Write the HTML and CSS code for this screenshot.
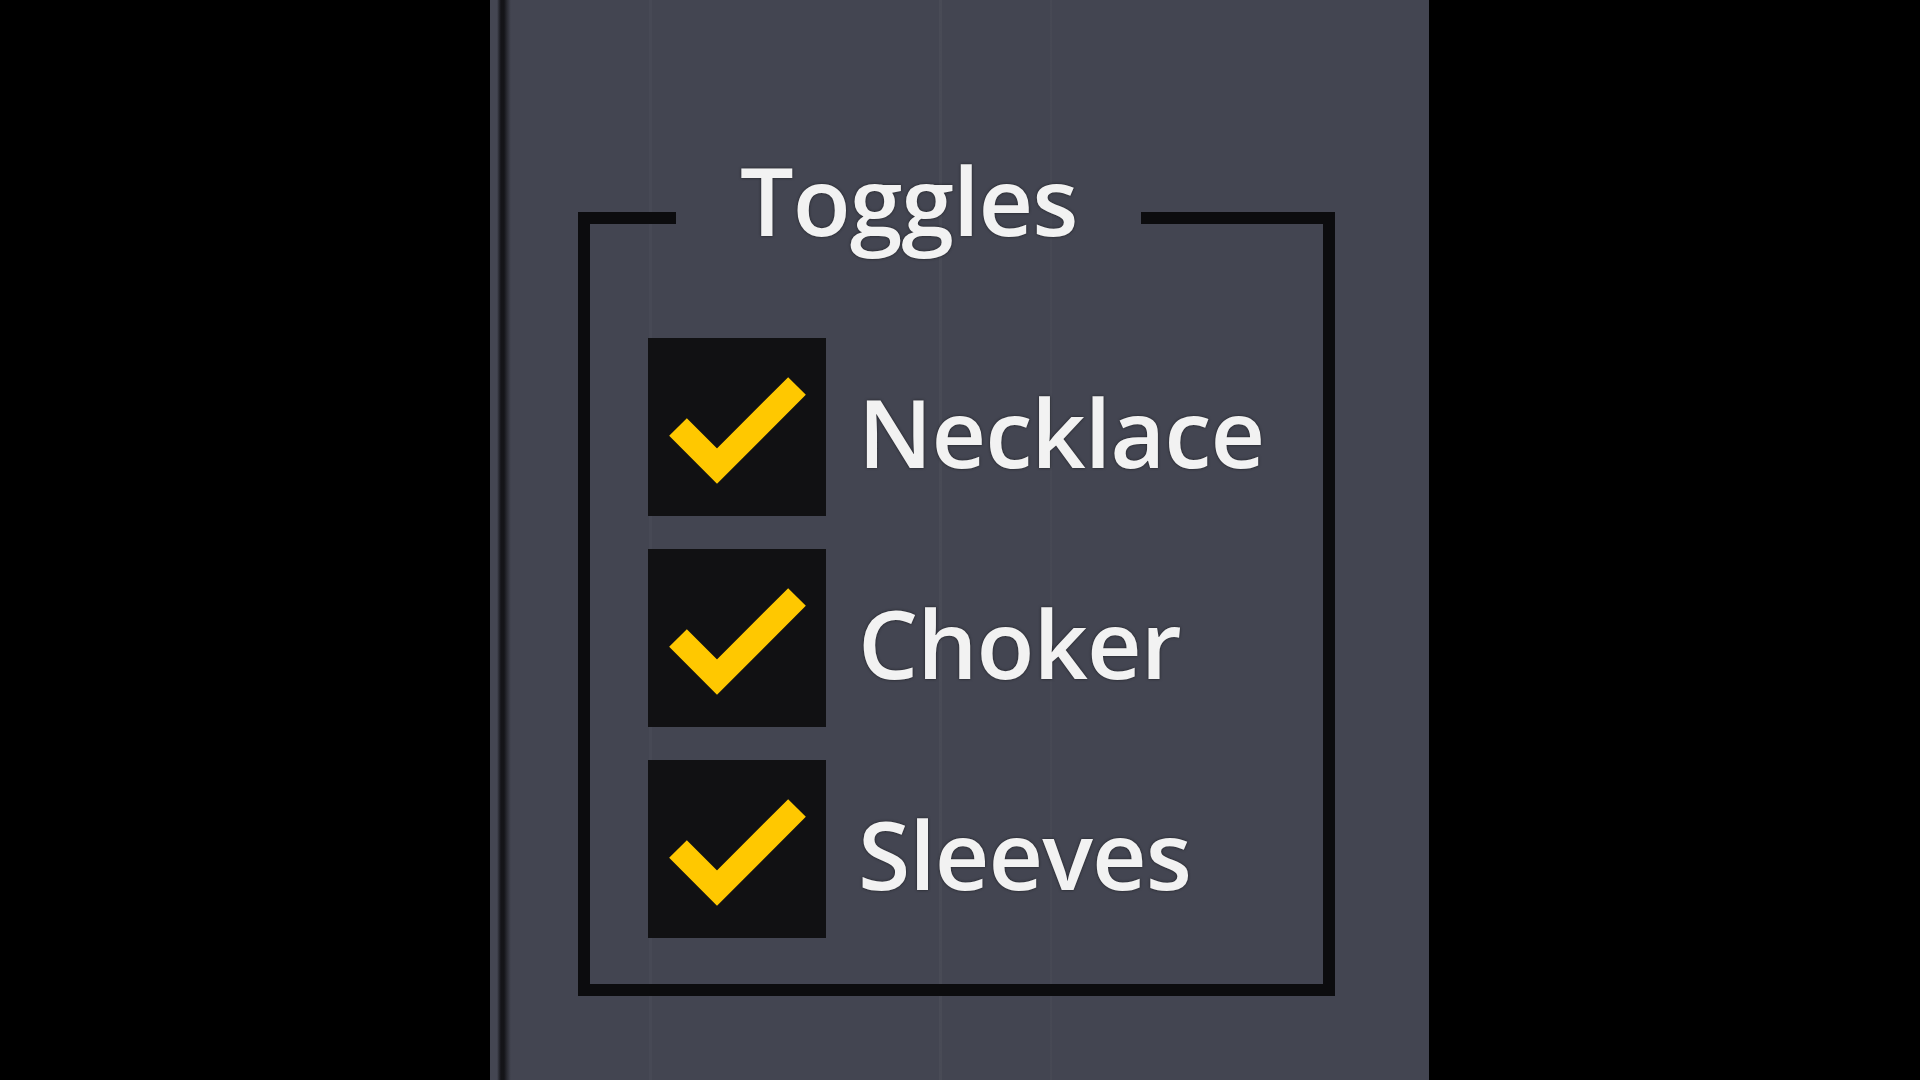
FILE: index.html
```html
<!DOCTYPE html>
<html lang="en">
<head>
<meta charset="utf-8">
<title>Toggles</title>
<link rel="stylesheet" href="styles.css">
</head>
<body>
<div class="screen">
  <aside class="panel">
    <fieldset class="group">
      <legend class="group-title">Toggles</legend>
      <label class="toggle">
        <span class="box"><svg viewBox="0 0 178 178" class="tick"><polyline points="30,89 69,128 149,48"/></svg></span>
        <span class="text">Necklace</span>
      </label>
      <label class="toggle">
        <span class="box"><svg viewBox="0 0 178 178" class="tick"><polyline points="30,89 69,128 149,48"/></svg></span>
        <span class="text">Choker</span>
      </label>
      <label class="toggle">
        <span class="box"><svg viewBox="0 0 178 178" class="tick"><polyline points="30,89 69,128 149,48"/></svg></span>
        <span class="text">Sleeves</span>
      </label>
    </fieldset>
  </aside>
</div>
</body>
</html>
```
FILE: styles.css
```css
html, body {
  margin: 0;
  padding: 0;
  background: #000;
}
.screen {
  width: 1920px;
  height: 1080px;
  display: flex;
  background: #000;
}
.panel {
  margin-left: 490px;
  width: 939px;
  height: 1080px;
  box-sizing: border-box;
  padding-left: 88px;
  padding-top: 135px;
  background:
    linear-gradient(to right, #444652 0, #444652 7px, #2a2b33 9px, #141418 11px, #141418 14px, #2a2b33 17px, #444652 21px, transparent 21px),
    linear-gradient(to right, transparent 159px, rgba(255,255,255,0.025) 159px, rgba(255,255,255,0.025) 162px, transparent 162px),
    linear-gradient(to right, transparent 449px, rgba(255,255,255,0.03) 449px, rgba(255,255,255,0.03) 452px, transparent 452px),
    linear-gradient(to right, transparent 560px, rgba(255,255,255,0.02) 560px, rgba(255,255,255,0.02) 562px, transparent 562px),
    #434551;
  font-family: "Open Sans", "Noto Sans", sans-serif;
}
.group {
  margin: 0;
  width: 757px;
  box-sizing: border-box;
  border: 12px solid #0c0c0e;
  padding: 38px 0 46px 58px;
  display: flex;
  flex-direction: column;
  gap: 33px;
}
.group-title {
  padding: 0 64px 36px 64px;
  margin-left: 28px;
  font-size: 95px;
  font-weight: 600;
  letter-spacing: -1px;
  line-height: 1.362;
  color: #f2f2f2;
  text-shadow: 0 0 3px rgba(0,0,0,0.6);
}
.toggle {
  display: flex;
  align-items: center;
  gap: 32px;
}
.box {
  width: 178px;
  height: 178px;
  background: #111113;
  flex: none;
  display: block;
}
.tick {
  display: block;
  width: 178px;
  height: 178px;
}
.tick polyline {
  fill: none;
  stroke: #ffc800;
  stroke-width: 25;
  stroke-linecap: butt;
  stroke-linejoin: miter;
}
.text {
  font-size: 95px;
  font-weight: 600;
  letter-spacing: -1px;
  line-height: 1.362;
  color: #f2f2f2;
  text-shadow: 0 0 3px rgba(0,0,0,0.6);
  padding-top: 9px;
}
```
